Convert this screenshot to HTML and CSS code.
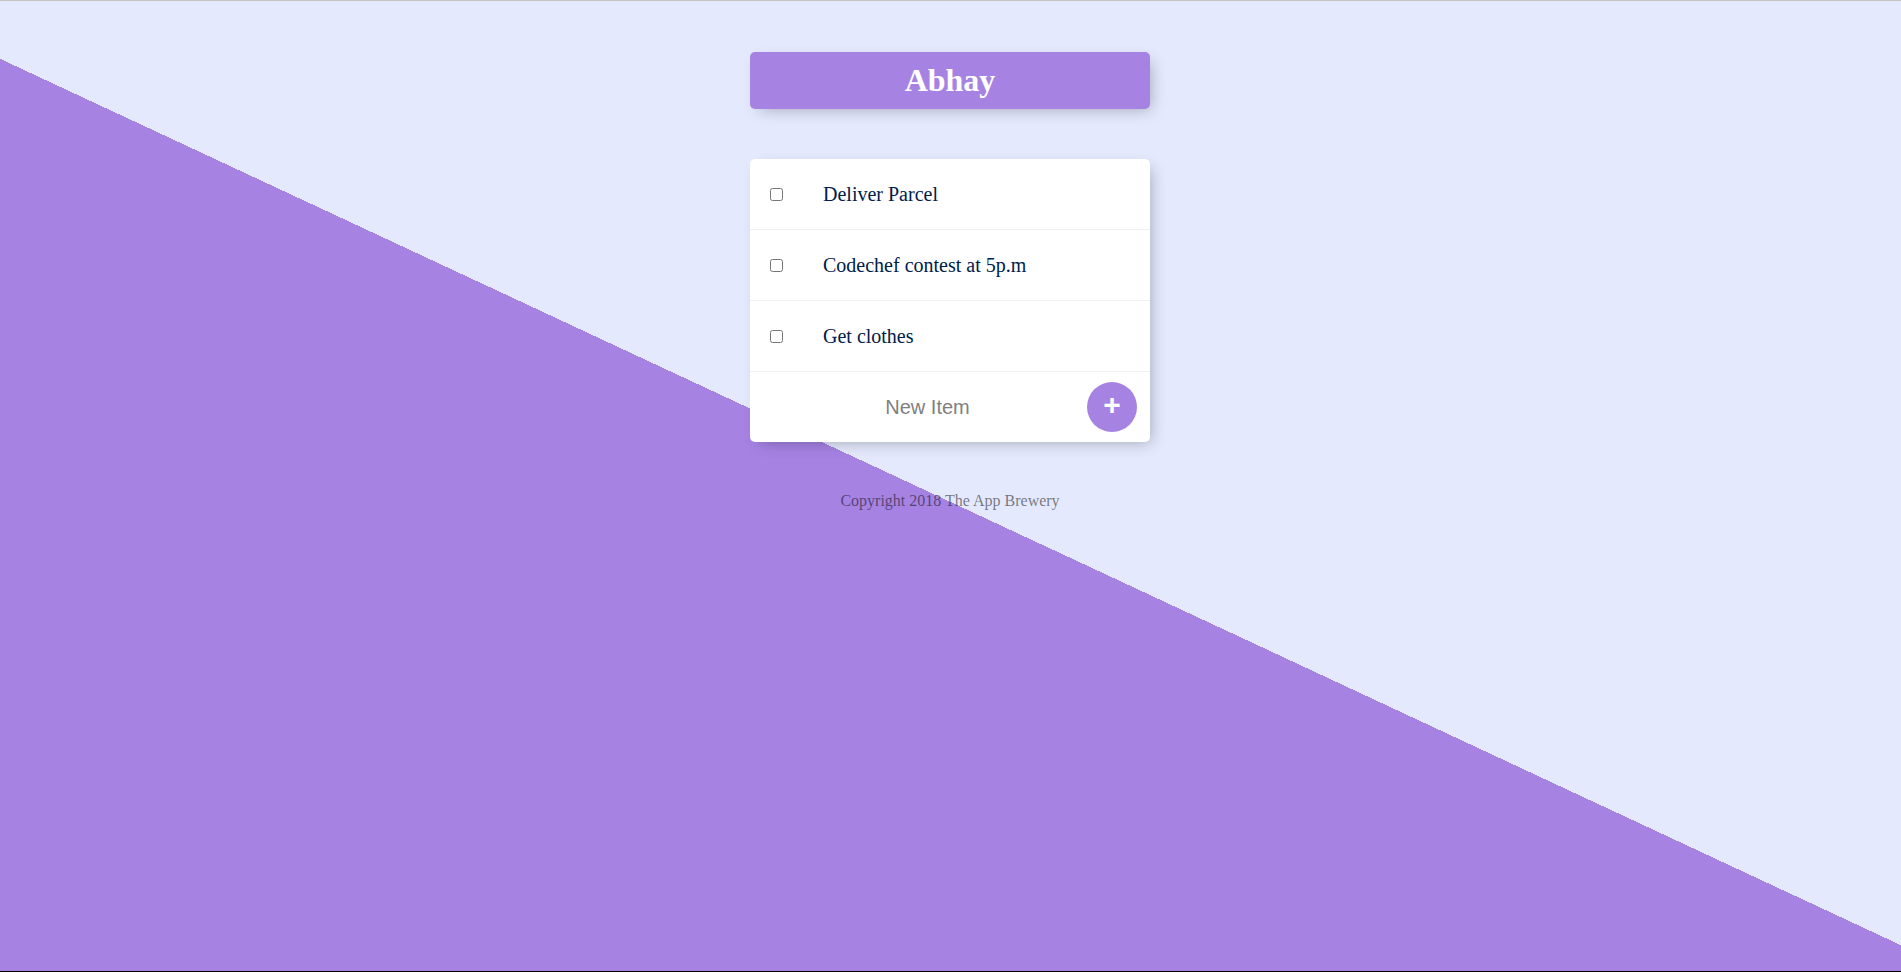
FILE: index.html
```html
<!DOCTYPE html>
<html lang="en">
<head>
<meta charset="utf-8">
<title>To Do List</title>
<link rel="stylesheet" href="styles.css">
</head>
<body>
<div class="frame-top"></div>
<div class="box heading">
  <h1 class="title">Abhay</h1>
</div>
<div class="box">
  <div class="item">
    <input class="check" type="checkbox">
    <p class="item-text">Deliver Parcel</p>
  </div>
  <div class="item">
    <input class="check" type="checkbox">
    <p class="item-text">Codechef contest at 5p.m</p>
  </div>
  <div class="item">
    <input class="check" type="checkbox">
    <p class="item-text">Get clothes</p>
  </div>
  <form class="item new-form" onsubmit="return false;">
    <input class="new-item" type="text" name="newItem" placeholder="New Item" autocomplete="off">
    <button class="add-btn" type="submit" name="button">+</button>
  </form>
</div>
<footer class="footer">Copyright 2018 The App Brewery</footer>
<div class="frame-bottom"></div>
</body>
</html>
```
FILE: styles.css
```css
html {
  background-color: #E4E9FD;
  background-image: linear-gradient(25deg, #A683E3 50%, #E4E9FD 50%);
  min-height: 1004px;
  font-family: "Liberation Serif", "Times New Roman", serif;
  overflow: hidden;
}

body {
  margin: 0 8px 0 7px;
  padding-top: 2px;
}

.frame-top {
  position: fixed;
  top: 0;
  left: 0;
  right: 0;
  height: 1px;
  background: #c2c2c2;
}

.frame-bottom {
  position: fixed;
  bottom: 0;
  left: 0;
  right: 0;
  height: 1px;
  background: #000;
}

.title {
  color: #fff;
  padding: 10px;
  font-size: 32px;
  font-weight: bold;
  margin: 21px 0;
}

.box {
  max-width: 400px;
  margin: 50px auto;
  background: #fff;
  border-radius: 5px;
  box-shadow: 5px 5px 15px -5px rgba(0, 0, 0, 0.3);
}

.heading {
  background-color: #A683E3;
  text-align: center;
}

.item {
  min-height: 70px;
  display: flex;
  align-items: center;
  border-bottom: 1px solid #F1F1F1;
}

.item:last-child {
  border-bottom: 0;
}

.check {
  margin: 20px;
  width: 13px;
  height: 13px;
}

.item-text {
  margin: 0;
  padding: 20px;
  font-size: 20px;
  font-weight: 200;
  color: #00204a;
}

.new-form {
  margin: 0 0 0 20px;
}

.new-item {
  text-align: center;
  height: 60px;
  width: 275px;
  border: none;
  font-family: "Liberation Sans", Arial, sans-serif;
  font-size: 20px;
  font-weight: 200;
  padding: 1px 22px 1px 20px;
  margin: 0;
  background: transparent;
}

.new-item:focus {
  outline: none;
}

.new-item::placeholder {
  color: grey;
  opacity: 1;
}

.add-btn {
  min-height: 50px;
  width: 50px;
  margin: 0;
  border-radius: 50%;
  border: 0;
  background-color: #A683E3;
  color: #fff;
  font-family: "Liberation Sans", Arial, sans-serif;
  font-size: 30px;
  font-weight: bold;
  padding: 1px 6px 6px;
  flex: none;
}

.footer {
  color: rgba(0, 0, 0, 0.5);
  text-align: center;
  font-size: 16px;
}
```
